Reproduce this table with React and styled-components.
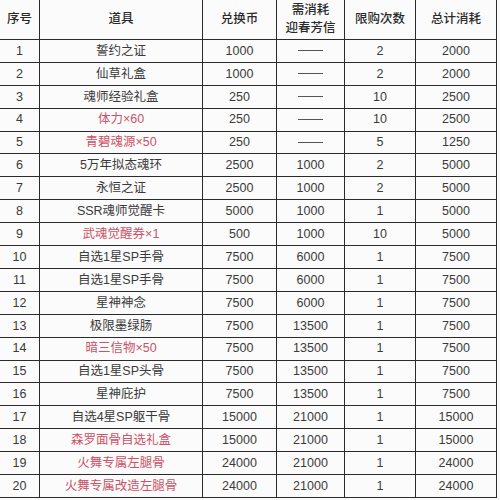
import React from "react";
import styled, { createGlobalStyle } from "styled-components";

const Global = createGlobalStyle`
  html, body { margin: 0; padding: 0; background: #fafafa; }
  body { font-family: "Liberation Sans", "Noto Sans CJK SC", sans-serif; }
`;

const Table = styled.div`
  display: grid;
  grid-template-columns: 40px 163px 74px 68px 71px 81px;
  grid-template-rows: 40px repeat(20, 1fr);
  width: 497px;
  height: 498px;
  background: #fbfbfb;
`;

const Cell = styled.div`
  display: flex;
  align-items: center;
  justify-content: center;
  text-align: center;
  border-right: 1.5px solid #2b2b2b;
  border-bottom: 1.5px solid #2b2b2b;
  font-size: 12.5px;
  line-height: ${(p) => (p.$head ? 1.4 : 1.15)};
  color: ${(p) => (p.$red ? "#cc5266" : p.$head ? "#2a2a2a" : "#3a3a3a")};
  font-weight: ${(p) => (p.$head ? 500 : 400)};
  white-space: nowrap;
`;

const Dash = styled.span`
  display: inline-block;
  width: 25px;
  height: 1px;
  background: #555;
`;

const rows = [
  ["1", "誓约之证", "1000", null, "2", "2000"],
  ["2", "仙草礼盒", "1000", null, "2", "2000"],
  ["3", "魂师经验礼盒", "250", null, "10", "2500"],
  ["4", "体力×60", "250", null, "10", "2500", true],
  ["5", "青碧魂源×50", "250", null, "5", "1250", true],
  ["6", "5万年拟态魂环", "2500", "1000", "2", "5000"],
  ["7", "永恒之证", "2500", "1000", "2", "5000"],
  ["8", "SSR魂师觉醒卡", "5000", "1000", "1", "5000"],
  ["9", "武魂觉醒券×1", "500", "1000", "10", "5000", true],
  ["10", "自选1星SP手骨", "7500", "6000", "1", "7500"],
  ["11", "自选1星SP手骨", "7500", "6000", "1", "7500"],
  ["12", "星神神念", "7500", "6000", "1", "7500"],
  ["13", "极限墨绿肠", "7500", "13500", "1", "7500"],
  ["14", "暗三信物×50", "7500", "13500", "1", "7500", true],
  ["15", "自选1星SP头骨", "7500", "13500", "1", "7500"],
  ["16", "星神庇护", "7500", "13500", "1", "7500"],
  ["17", "自选4星SP躯干骨", "15000", "21000", "1", "15000"],
  ["18", "森罗面骨自选礼盒", "15000", "21000", "1", "15000", true],
  ["19", "火舞专属左腿骨", "24000", "21000", "1", "24000", true],
  ["20", "火舞专属改造左腿骨", "24000", "21000", "1", "24000", true],
];

const headers = ["序号", "道具", "兑换币", "需消耗\n迎春芳信", "限购次数", "总计消耗"];

export default function App() {
  return (
    <>
      <Global />
      <Table>
        {headers.map((h, i) => (
          <Cell key={"h" + i} $head>
            {h.includes("\n") ? (
              <span>
                {h.split("\n")[0]}
                <br />
                {h.split("\n")[1]}
              </span>
            ) : (
              h
            )}
          </Cell>
        ))}
        {rows.map((r) => (
          <React.Fragment key={r[0]}>
            <Cell>{r[0]}</Cell>
            <Cell $red={r[6]}>{r[1]}</Cell>
            <Cell>{r[2]}</Cell>
            <Cell>{r[3] === null ? <Dash /> : r[3]}</Cell>
            <Cell>{r[4]}</Cell>
            <Cell>{r[5]}</Cell>
          </React.Fragment>
        ))}
      </Table>
    </>
  );
}
